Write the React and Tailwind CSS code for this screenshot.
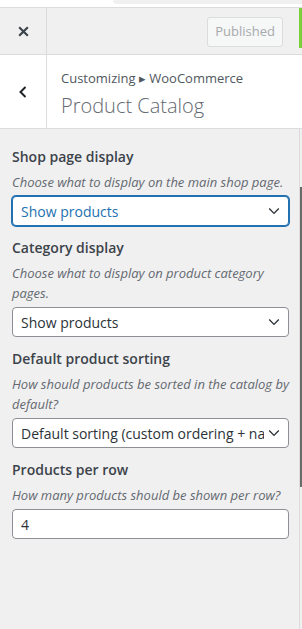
import React from "react";

const Chevron = () => (
  <svg width="16" height="16" viewBox="0 0 20 20" className="shrink-0 ml-[2px]">
    <path d="M4 7l6 6 6-6" fill="none" stroke="#2c3338" strokeWidth="1.7" />
  </svg>
);

const Field = ({ label, desc, children }) => (
  <div className="mb-[12px]">
    <div className="text-[14px] font-semibold text-[#3c434a] leading-[20px]">{label}</div>
    <div className="text-[13px] italic text-[#646970] leading-[20px] mt-[5px] mb-[4px]">{desc}</div>
    {children}
  </div>
);

const Select = ({ value, focused }) => (
  <div
    className={`flex items-center justify-between h-[30px] pl-[8px] pr-[6px] bg-white rounded-[4px] border ${
      focused ? "border-[#2271b1] shadow-[0_0_0_1px_#2271b1]" : "border-[#8c8f94]"
    }`}
  >
    <span className={`min-w-0 text-[14px] whitespace-nowrap overflow-hidden ${focused ? "text-[#2271b1]" : "text-[#2c3338]"}`}>
      {value}
    </span>
    <Chevron />
  </div>
);

export default function App() {
  return (
    <div className="w-[302px] h-[629px] overflow-hidden bg-[#f0f0f1] flex flex-col" style={{ fontFamily: '"Open Sans", "Noto Sans", sans-serif' }}>
      {/* top strip */}
      <div className="h-[8px] bg-white border-b border-[#dcdcde] flex justify-end">
        <div className="w-[189px] h-[4px] bg-[#f0f0f1] rounded-bl-[6px]" />
      </div>

      {/* actions bar */}
      <div className="h-[47px] flex bg-[#f0f0f1] border-b border-[#dcdcde]">
        <div className="w-[47px] border-r border-[#dcdcde] flex items-center justify-center">
          <svg width="13" height="13" viewBox="0 0 12 12">
            <path d="M2 2l8 8M10 2l-8 8" stroke="#3c434a" strokeWidth="2" />
          </svg>
        </div>
        <div className="flex-1 flex items-start justify-end pt-[9px] pr-[16px]">
          <div className="h-[30px] px-[7px] flex items-center rounded-[3px] border border-[#dcdcde] bg-[#f6f7f7] text-[13px] text-[#a7aaad]">
            Published
          </div>
        </div>
        <div className="w-[3px] h-[40px] bg-[#7ad03a]" />
      </div>

      {/* section header */}
      <div className="h-[74px] flex bg-white border-b border-[#dcdcde]">
        <div className="w-[47px] border-r border-[#dcdcde] flex items-center justify-center">
          <svg width="12" height="14" viewBox="0 0 12 14">
            <path d="M8.5 2L3.5 7l5 5" fill="none" stroke="#1d2327" strokeWidth="2" />
          </svg>
        </div>
        <div className="flex-1 pl-[14px] pt-[13px]">
          <div className="text-[13px] text-[#50575e] leading-[20px]">Customizing ▸ WooCommerce</div>
          <div className="text-[20px] font-light text-[#646970] leading-[28px] mt-[4px]">Product Catalog</div>
        </div>
      </div>

      {/* controls */}
      <div className="flex-1 flex min-h-0">
        <div className="flex-1 min-w-0 pl-[12px] pr-[10px] pt-[18px]">
          <Field label="Shop page display" desc="Choose what to display on the main shop page.">
            <Select value="Show products" focused />
          </Field>
          <Field label="Category display" desc="Choose what to display on product category pages.">
            <Select value="Show products" />
          </Field>
          <Field label="Default product sorting" desc="How should products be sorted in the catalog by default?">
            <Select value="Default sorting (custom ordering + name)" />
          </Field>
          <Field label="Products per row" desc="How many products should be shown per row?">
            <div className="h-[30px] pl-[8px] flex items-center bg-white rounded-[4px] border border-[#8c8f94] text-[14px] text-[#2c3338]">
              4
            </div>
          </Field>
        </div>
        <div className="w-[3px] border-l border-[#dcdcde] bg-[#f0f0f1] flex flex-col pt-[58px]">
          <div className="h-[300px] w-[2px] bg-[#6b6b6b]" />
        </div>
      </div>
    </div>
  );
}
